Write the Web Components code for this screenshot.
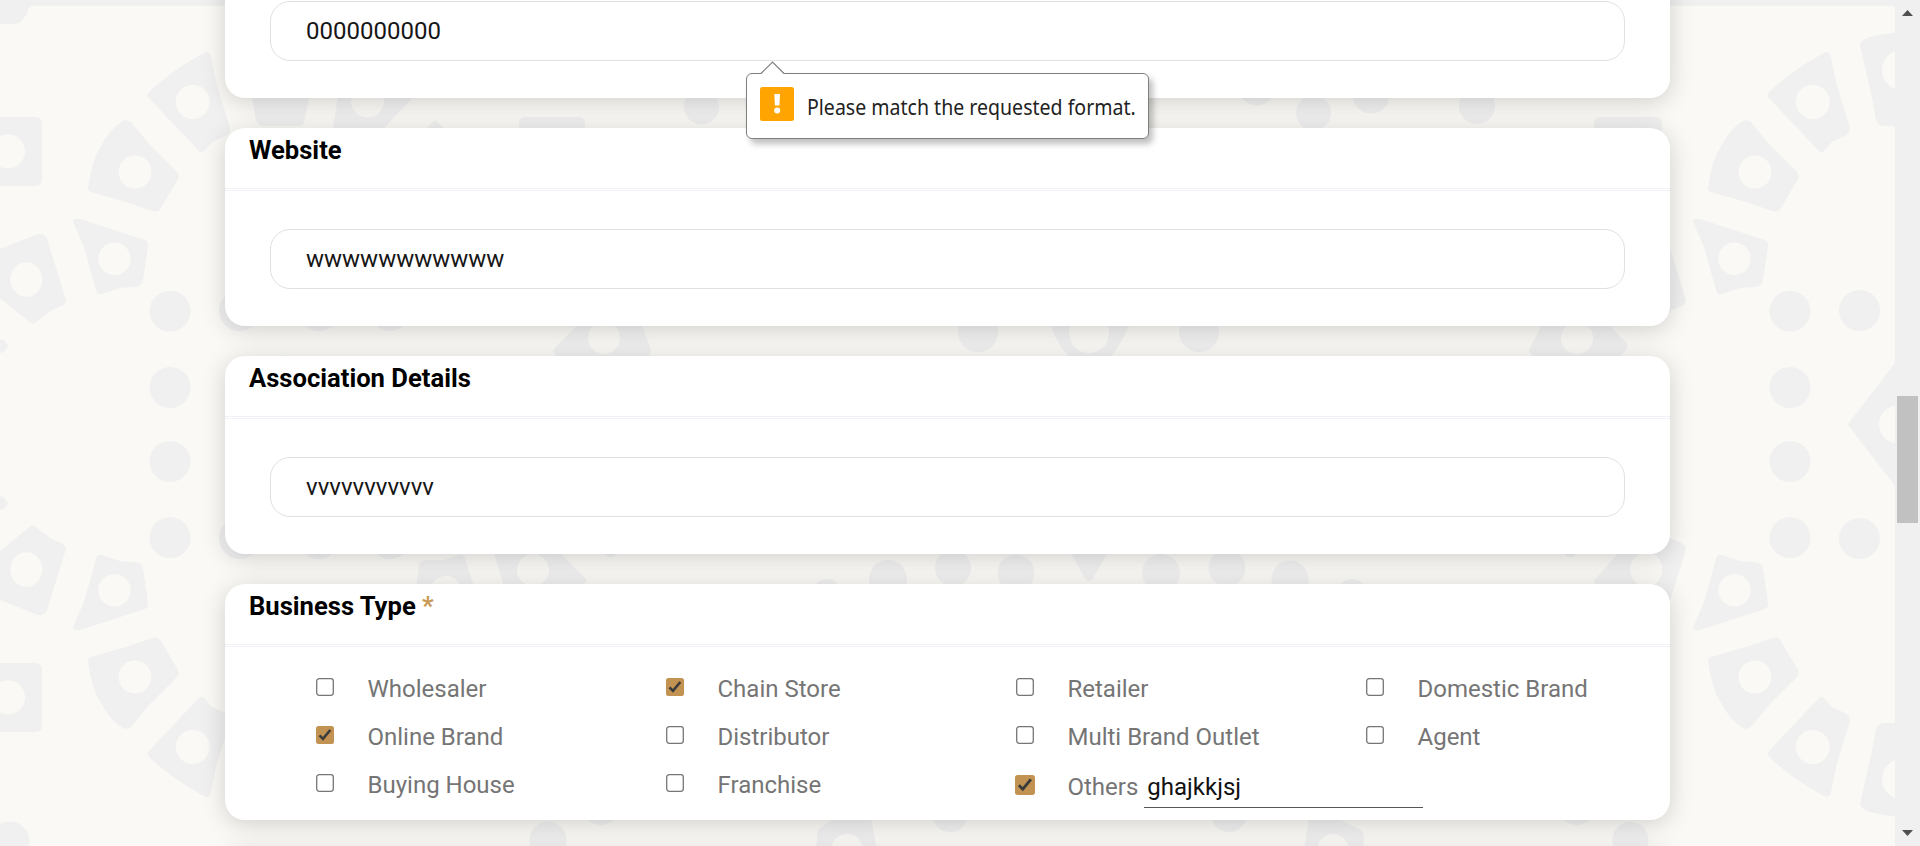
<!DOCTYPE html>
<html lang="en">
<head>
<meta charset="utf-8">
<title>Registration</title>
<style>
html,body{margin:0;height:100%;overflow:hidden}
body{font-family:Roboto,"Liberation Sans",sans-serif;font-size:24px;color:#000}
</style>
</head>
<body>
<registration-page></registration-page>
<script>
const define=(name,html)=>customElements.define(name,class extends HTMLElement{
  constructor(){super();const t=document.createElement('template');t.innerHTML=html;
    this.attachShadow({mode:'open'}).append(t.content.cloneNode(true));}
});

define('tile-backdrop',`
<style>:host{display:block;position:absolute;inset:0;background:#faf9f5;z-index:-1}svg{display:block}</style>
<svg width="1895" height="846" viewBox="0 0 1895 846" fill="#f0f0f0">
<defs>
<g id="half">
<path d="M147 96Q149 90 172 73Q190 60 206 52Q210 52 211 57L216 82L230 128Q230 134 225 136L212 142L204 151Q202 154 199 151Z"/><circle cx="192.700" cy="102" r="17" fill="#faf9f5"/>
<path d="M88 188Q92 160 100 148Q110 128 123 121Q126 119 131 122L150 145L177 172Q180 176 178 179L161 208Q158 213 152 211L126 202L91 192Q88 191 88 188Z"/><circle cx="135" cy="172" r="16.500" fill="#faf9f5"/>
<path d="M73 222Q73 218 80 219L145 240Q149 242 148 247L143 280Q142 287 134 287L120 288L102 294Q97 295 96 290L84 247Z"/><circle cx="114.500" cy="258.700" r="16.200" fill="#faf9f5"/>
<path d="M-26 268Q-26 263 -20 259L0 249L38 234Q45 233 47 239L57 271L66 300Q66 304 61 306L50 311L35 323Q32 325 28 321L0 298Z"/><ellipse cx="26.300" cy="279.500" rx="16" ry="17.300" fill="#faf9f5"/>
<rect x="-26" y="117" width="68" height="69" rx="6"/><circle cx="8" cy="151.500" r="17" fill="#faf9f5"/>
<path d="M0 339L4 340L8 346L4 352L0 353Z"/>
<circle cx="170" cy="311.200" r="20.500"/><circle cx="170" cy="387.500" r="20.500"/><circle cx="239.500" cy="310.500" r="20.500"/>
<circle cx="319" cy="310.500" r="20.500"/><circle cx="390" cy="310.500" r="20.500"/>
<path d="M240 45Q241 40 250 37Q282 28 314 37Q324 40 323 45L309 98L304 123Q303 126 299 126L264 126Q258 126 256 120L252 98Z"/><circle cx="282" cy="70" r="20" fill="#faf9f5"/>
<path d="M282 355L228 425L282 495Z"/><circle cx="278" cy="424.500" r="19" fill="#faf9f5"/>
</g>
</defs>
<path d="M27 0H1895V6H32L28 9L27 14L20 23Q12 25 0 24V0Z"/>
<use href="#half"/><use href="#half" transform="matrix(1 0 0 -1 0 849)"/>
<use href="#half" x="1620"/><use href="#half" transform="matrix(1 0 0 -1 1620 849)"/>
<path d="M339 90L333 128H384L420 90Z"/><circle cx="367.500" cy="101" r="16.500" fill="#faf9f5"/>
<path d="M425 130L435 120L446 130Z"/>
<rect x="519" y="117" width="66" height="68" rx="6"/><circle cx="701.500" cy="107" r="17.500"/><circle cx="1477" cy="106" r="18"/>
<circle cx="1257" cy="87" r="18.500"/><circle cx="1313.500" cy="113" r="17.500"/><circle cx="1371" cy="95.500" r="18"/>
<path d="M586 316L553 350Q553 353 560 360H649L651 350L640 320Z"/><circle cx="604" cy="338" r="16" fill="#faf9f5"/>
<circle cx="978" cy="332" r="20"/><circle cx="1199" cy="332" r="20"/>
<path d="M1049 320Q1054 340 1069 357H1111Q1124 340 1131 320Z"/><circle cx="1089" cy="333" r="20" fill="#faf9f5"/>
<path d="M1544 320L1529 350Q1530 356 1540 360H1618L1628 346L1605 320Z"/><circle cx="1577" cy="338" r="16" fill="#faf9f5"/>
<path d="M416 590L419 564Q420 561 425 560L445 560Q455 555 462 555Q465 556 466 562L475 590Z"/><circle cx="446" cy="592" r="16" fill="#faf9f5"/>
<path d="M493 550L505 590H580L587 580L557 550Z"/><circle cx="533" cy="570" r="16" fill="#faf9f5"/>
<circle cx="611" cy="550" r="7"/><circle cx="1570" cy="550" r="7"/>
<circle cx="827" cy="593" r="14"/><circle cx="888" cy="579" r="19"/><circle cx="953" cy="568" r="18"/><circle cx="1016" cy="573" r="18.500"/>
<path d="M1069 550H1109L1092 580L1089 581L1086 580Z"/>
<circle cx="1161" cy="573" r="19"/><circle cx="1227" cy="568" r="18.500"/><circle cx="1290" cy="579" r="18.500"/><circle cx="1352" cy="593" r="14"/>
<circle cx="10" cy="841" r="19.500"/><circle cx="1630.500" cy="840" r="18"/><circle cx="548" cy="840" r="18.500"/>
<circle cx="601" cy="807" r="18"/><circle cx="1577" cy="807" r="18"/>
<path d="M816 850L818 830L834 818H871L877 850Z"/><circle cx="847" cy="850" r="16" fill="#faf9f5"/>
<circle cx="950" cy="814" r="18"/><circle cx="1229" cy="814" r="18"/>
<path d="M1304 850L1309 818H1337L1361 830L1364 836L1363 850Z"/><circle cx="1333" cy="850" r="16" fill="#faf9f5"/>
</svg>`);

define('form-card',`
<style>
:host{display:block;box-sizing:border-box;width:1445px;height:var(--h,198px);background:#fff;border-radius:20px;box-shadow:0 4px 25px rgba(0,0,0,.17)}
header{box-sizing:border-box;height:60px;padding:8px 0 0 24px;line-height:29px;font-size:25.6px;font-weight:700}
hr{margin:0;border:1px solid #f1f1f8;height:1px;background:#fff}
</style>
<header><slot name="title"></slot></header><hr><slot></slot>`);

define('text-field',`
<style>
:host{display:flex;align-items:center;box-sizing:border-box;height:60px;margin:38px 45px 0;padding:0 35px;border:1px solid #e1e1e1;border-radius:20px;background:#fff;line-height:28px;color:#161616}
</style><slot></slot>`);

customElements.define('check-option',class extends HTMLElement{
  constructor(){super();
    const on=this.hasAttribute('checked');
    this.attachShadow({mode:'open'}).innerHTML=`
<style>
:host{display:grid;grid-template-columns:18px auto;column-gap:33.500px;justify-content:start;align-items:center;height:48px;color:#757575}
:host([large]){margin-top:2px}
svg{display:block;width:18px;height:18px;overflow:visible}
:host([large]) svg{width:20px;height:20px;margin-left:-1px}
.label{display:flex;align-items:center;line-height:28px;padding-top:3px}
:host([large]) .label{align-self:start;padding-top:5px}
</style>
<svg viewBox="0 0 18 18">${on?
'<rect width="18" height="18" rx="2.500" fill="#c19251"/><path d="M3.500 9.300L7 12.800L14.300 4" fill="none" stroke="#3b3b3b" stroke-width="2.600"/>':
'<rect x=".7" y=".7" width="16.600" height="16.600" rx="2.500" fill="#fff" stroke="#767676" stroke-width="1.300"/>'}</svg>
<span class="label"><slot></slot></span>`;}
});

define('line-input',`
<style>:host{display:block;box-sizing:border-box;width:279px;height:42px;margin-left:6px;padding:0 3px;border-bottom:1px solid #555;line-height:42px;color:#111}</style><slot></slot>`);

define('option-grid',`
<style>:host{display:grid;grid-template-columns:repeat(4,350px);grid-auto-rows:48px;padding:16px 0 0 91px}</style><slot></slot>`);

define('validation-bubble',`
<style>
:host{position:absolute;left:746px;top:73px;box-sizing:border-box;width:403px;height:66px;display:flex;align-items:center;padding:0 13px;gap:13px;border:1px solid #7f7f7f;border-radius:6px;background:#fff;box-shadow:4px 5px 6px rgba(0,0,0,.25);font:22px/30px "Noto Sans","Open Sans",sans-serif;color:#222}
.tip{position:absolute;left:13px;top:-13px}
.mark{display:block;flex:none;margin-top:-5px}
span{white-space:nowrap;transform:scaleX(.888);transform-origin:0 50%}
</style>
<svg class="tip" width="26" height="14"><path d="M1 13L12.500 1L24 13V14H1Z" fill="#fff"/><path d="M1 12.500L12.500 1L24 12.500" fill="none" stroke="#7f7f7f" stroke-width="1.200"/></svg>
<svg class="mark" width="34" height="34"><rect width="34" height="34" rx="2.500" fill="#ffa400"/><path d="M14.300 7H20L19.400 18.500H14.900Z" fill="#fff"/><circle cx="17.200" cy="23.500" r="3" fill="#fff"/></svg>
<span><slot></slot></span>`);

define('page-scrollbar',`
<style>
:host{display:flex;flex-direction:column;align-items:center;width:25px;height:846px;background:#f0f0f0}
.up{margin-top:10px}.thumb{width:21px;height:127px;margin-top:380px;background:#c1c1c1}.down{margin-top:auto;margin-bottom:10px}svg{display:block}
</style>
<svg class="up" width="11" height="6"><path d="M0 6L5.500 0L11 6Z" fill="#505050"/></svg><div class="thumb"></div>
<svg class="down" width="11" height="6"><path d="M0 0L5.500 6L11 0Z" fill="#505050"/></svg>`);

define('registration-page',`
<style>
:host{display:flex;position:relative;width:1920px;height:846px;overflow:hidden;isolation:isolate}
main{width:1895px;box-sizing:border-box;height:846px;padding-left:225px;display:flex;flex-direction:column;gap:30px;overflow:hidden}
form-card{flex:none}
.first{margin-top:-100px}
b{font-weight:700;color:#c99a56}
</style>
<tile-backdrop></tile-backdrop>
<main>
<form-card class="first"><text-field>0000000000</text-field></form-card>
<form-card><span slot="title">Website</span><text-field>wwwwwwwwwww</text-field></form-card>
<form-card><span slot="title">Association Details</span><text-field>vvvvvvvvvvv</text-field></form-card>
<form-card style="--h:236px"><span slot="title">Business Type <b>*</b></span>
<option-grid>
<check-option>Wholesaler</check-option><check-option checked>Chain Store</check-option><check-option>Retailer</check-option><check-option>Domestic Brand</check-option>
<check-option checked>Online Brand</check-option><check-option>Distributor</check-option><check-option>Multi Brand Outlet</check-option><check-option>Agent</check-option>
<check-option>Buying House</check-option><check-option>Franchise</check-option><check-option checked large>Others<line-input>ghajkkjsj</line-input></check-option>
</option-grid></form-card>
<form-card></form-card>
</main>
<page-scrollbar></page-scrollbar>
<validation-bubble>Please match the requested format.</validation-bubble>`);
</script>
</body>
</html>
